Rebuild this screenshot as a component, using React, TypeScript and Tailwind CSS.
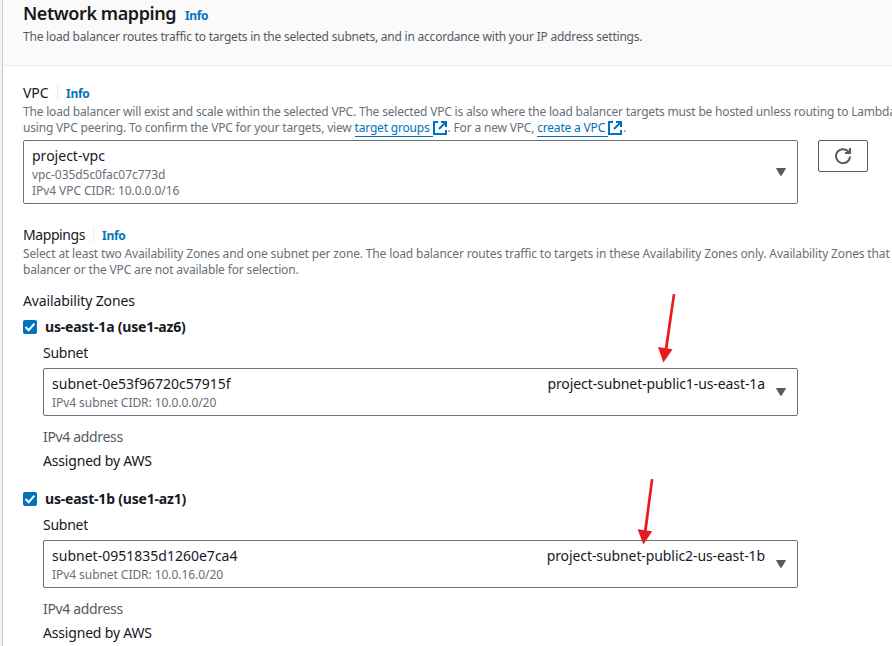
import React from 'react';

function Info({ className = '' }: { className?: string }) {
  return <a className={`text-xs font-bold text-[#0073bb] ${className}`}>Info</a>;
}

function FieldLabel({ text, width }: { text: string; width: string }) {
  return (
    <div className="flex h-[22px] items-center leading-[22px]">
      <span className={`shrink-0 whitespace-nowrap ${width}`}>{text}</span>
      <span className="mr-2 h-4 w-px bg-[#eaeded]" />
      <Info className="pt-0.5 tracking-[-0.25px]" />
    </div>
  );
}

function ExternalIcon() {
  return (
    <svg viewBox="0 0 16 16" className="-ml-px inline-block h-4 w-4 align-[-4px]" fill="none" stroke="#0073bb" strokeWidth="2">
      <path d="M6 2H2v12h12v-4M9 2h5v5M14 2L7 9" />
    </svg>
  );
}

function Link({ children }: { children: React.ReactNode }) {
  return (
    <a className="text-[#0073bb]">
      <span className="inline-block h-[17px] border-b border-[#0073bb] pr-[3px]">{children}</span>
      <ExternalIcon />
    </a>
  );
}

function Caret() {
  return (
    <svg viewBox="0 0 10 8" className="h-2 w-2.5 shrink-0 self-center" fill="#545b64">
      <path d="M.7 0h8.6q.9 0 .5.8L5.7 7.5q-.7.9-1.4 0L.2.8Q-.2 0 .7 0z" />
    </svg>
  );
}

function Select({ title, lines, tag }: { title: string; lines: string[]; tag?: string }) {
  return (
    <div className="flex rounded-[2px] border border-[#687078] bg-white py-1 pr-[11px] pl-2">
      <div className="flex-1">
        <div className="flex justify-between leading-[22px]">
          <span className="tracking-[0.01px]">{title}</span>
          {tag && <span className="mr-[11px] tracking-[-0.09px]">{tag}</span>}
        </div>
        {lines.map((line) => (
          <div key={line} className="text-xs leading-4 tracking-[-0.06px] text-[#687078]">{line}</div>
        ))}
      </div>
      <Caret />
    </div>
  );
}

function Zone({ name, subnet, cidr, tag }: { name: string; subnet: string; cidr: string; tag: string }) {
  return (
    <section className="flex flex-col leading-[22px]">
      <label className="flex items-center gap-2 font-bold tracking-[-0.2px]">
        <svg viewBox="0 0 14 14" className="h-3.5 w-3.5">
          <rect width="14" height="14" rx="2" fill="#0073bb" />
          <path d="M2.5 7l3.2 3.2L11.4 3.6" fill="none" stroke="#fff" strokeWidth="2" />
        </svg>
        {name}
      </label>
      <div className="flex w-[775px] flex-col pl-5">
        <span className="mt-1 mb-1 tracking-[-0.25px]">Subnet</span>
        <Select title={subnet} lines={[cidr]} tag={tag} />
        <span className="mt-2.5 tracking-[-0.34px] text-[#545b64]">IPv4 address</span>
        <span className="mt-0.5 tracking-[-0.18px]">Assigned by AWS</span>
      </div>
    </section>
  );
}

export default function App() {
  return (
    <div className="relative flex h-[646px] w-[892px] overflow-hidden bg-[#f2f3f3] pl-0.5 font-['Noto_Sans',sans-serif] text-sm tracking-[-0.12px] whitespace-nowrap text-[#16191f]">
      <div className="flex w-[890px] shrink-0 flex-col border-l border-[#c9d0d0] bg-white">
        <header className="h-[66px] border-b border-[#eaeded] bg-[#fafafa] pt-0.5 pl-5">
          <div className="flex h-[22px] items-baseline leading-[22px]">
            <h2 className="w-[162px] text-lg leading-[22px] font-semibold tracking-[-0.42px]">Network mapping</h2>
            <Info className="tracking-[-0.4px]" />
          </div>
          <p className="mt-[5px] text-xs leading-4 tracking-[-0.22px] text-[#545b64]">The load balancer routes traffic to targets in the selected subnets, and in accordance with your IP address settings.</p>
        </header>

        <main className="pt-4 pl-5">
          <FieldLabel text="VPC" width="w-[34px]" />
          <div className="h-9 text-xs leading-4 text-[#687078]">
            <p className="tracking-[-0.19px]">The load balancer will exist and scale within the selected VPC. The selected VPC is also where the load balancer targets must be hosted unless routing to Lambda</p>
            <p className="h-4 tracking-[-0.18px]">using VPC peering. To confirm the VPC for your targets, view <Link>target groups</Link>. For a new VPC, <Link>create a VPC</Link>.</p>
          </div>
          <div className="flex items-start gap-5">
            <div className="w-[775px]">
              <Select title="project-vpc" lines={['vpc-035d5c0fac07c773d', 'IPv4 VPC CIDR: 10.0.0.0/16']} />
            </div>
            <button className="flex h-8 w-[50px] items-center justify-center rounded-[2px] border border-[#545b64]">
              <svg viewBox="0 0 16 16" className="h-4 w-4" fill="none" stroke="#545b64" strokeWidth="2">
                <path d="M15 8.5A7 7 0 1 1 13 3.3L14.5 5M10 5h5V0" />
              </svg>
            </button>
          </div>

          <div className="mt-5">
            <FieldLabel text="Mappings" width="w-[70px] tracking-[-0.42px]" />
            <div className="text-xs leading-4 tracking-[-0.15px] text-[#687078]">
              <p>Select at least two Availability Zones and one subnet per zone. The load balancer routes traffic to targets in these Availability Zones only. Availability Zones that</p>
              <p>balancer or the VPC are not available for selection.</p>
            </div>
          </div>

          <h3 className="mt-3 mb-1 leading-[22px]">Availability Zones</h3>
          <div className="flex flex-col gap-4">
            <Zone name="us-east-1a (use1-az6)" subnet="subnet-0e53f96720c57915f" cidr="IPv4 subnet CIDR: 10.0.0.0/20" tag="project-subnet-public1-us-east-1a" />
            <Zone name="us-east-1b (use1-az1)" subnet="subnet-0951835d1260e7ca4" cidr="IPv4 subnet CIDR: 10.0.16.0/20" tag="project-subnet-public2-us-east-1b" />
          </div>
        </main>
      </div>

      {/* Hand-drawn arrows over the subnet names */}
      <svg viewBox="0 0 892 646" className="pointer-events-none absolute inset-0 h-full w-full" fill="#e81b1e">
        <path d="M672.7 294l2.6.3-7.7 54-2.8-.4zM658 347l14.6 2.3-9.2 13.2z" />
        <path d="M650.8 479l2.6.3-6.7 52-2.8-.4zM637.6 529.3l14.6 1.9-8.8 13.2z" />
      </svg>
    </div>
  );
}
